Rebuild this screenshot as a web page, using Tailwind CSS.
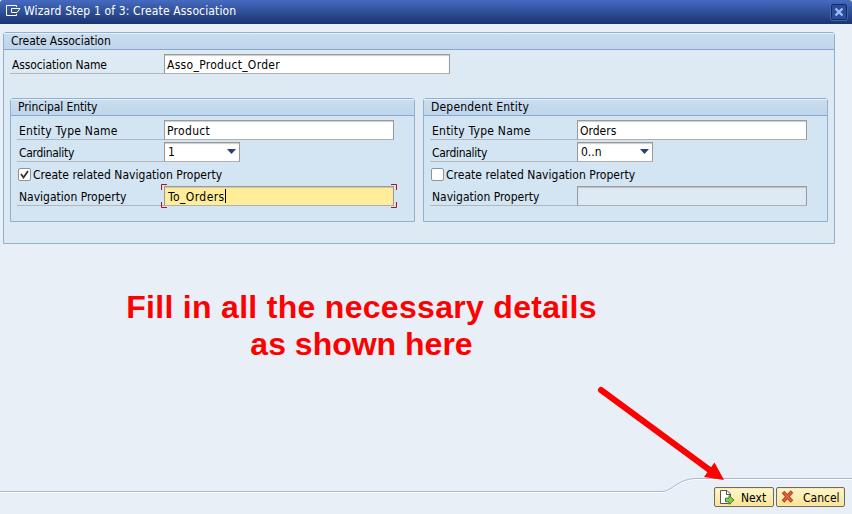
<!DOCTYPE html>
<html lang="en">
<head>
<meta charset="utf-8">
<title>Create Association</title>
<script src="https://cdn.jsdelivr.net/npm/@tailwindcss/browser@4"></script>
</head>
<body class="relative flex h-[514px] w-[852px] flex-col overflow-hidden bg-[#e8eff6] font-['DejaVu_Sans_Condensed','DejaVu_Sans',sans-serif] text-[12px] leading-[16px] whitespace-nowrap text-black">
  <header class="flex h-6 shrink-0 items-center rounded-t-[3px] bg-linear-to-b from-[#466bc2] to-[#19346f] pr-[5px] pl-[6px] text-white">
    <svg class="mb-[3px] h-[12px] w-[16px]" viewBox="0 0 16 12" fill="none" stroke="#fff"><path d="M10.5 2V.5H.5V10.5H10.5V9M9 3.500H5.5V7.5H11L14 3.5H9"/></svg>
    <h1 class="mb-[2px] ml-[2px] flex-1 tracking-[0.14px]">Wizard Step 1 of 3: Create Association</h1>
    <button class="grid h-4 w-4 place-items-center rounded-[2px] border border-[#142b63] bg-[#2b4c98] outline outline-[#3e64b0]"><svg class="size-[10px]" viewBox="0 0 10 10"><path d="M1.5 1.5L8.5 8.5M8.5 1.5L1.5 8.5" stroke="#9cbcff" stroke-width="2.4"/></svg></button>
  </header>
  <main class="mt-2 ml-[3px] h-[212px] w-[832px] shrink-0 rounded-t-[3px] border border-[#90b0cf] bg-[#deeaf3]">
    <h2 class="h-[17px] border-b border-[#86a9cb] bg-linear-to-b from-[#cbdeef] to-[#bfd5eb] pl-[7px] leading-[16px] tracking-[-0.06px] shadow-[inset_0_1px_#e4f1fb]">Create Association</h2>
    <div class="mt-[4px] ml-[6px] flex h-5">
      <label class="w-[154px] border-b border-[#b1b7bd] pl-[2px] leading-[22px] tracking-[-0.12px]">Association Name</label>
      <div class="w-[286px] border border-[#9a9a9c] border-b-[#aeb1b4] bg-white pl-[2px] leading-[20px] tracking-[0.3px] shadow-[inset_0_1px_1px_#ccc]">Asso_Product_Order</div>
    </div>
    <div class="mt-6 ml-[6px] flex gap-2">
      <section class="h-[124px] w-[405px] rounded-t-[3px] border border-[#90b0cf] bg-[#d3e4f2]">
        <h3 class="h-[17px] border-b border-[#86a9cb] bg-linear-to-b from-[#cbdeef] to-[#bfd5eb] pl-[7px] tracking-[-0.1px] shadow-[inset_0_1px_#e4f1fb]">Principal Entity</h3>
        <div class="mt-[4px] ml-[6px] flex flex-col gap-[2px]">
          <div class="flex h-5"><label class="w-[147px] border-b border-[#b1b7bd] pl-[2px] leading-[22px] tracking-[0.24px]">Entity Type Name</label><div class="w-[230px] border border-[#9a9a9c] border-b-[#aeb1b4] bg-white pl-[2px] leading-[20px] tracking-[0.3px] shadow-[inset_0_1px_1px_#ccc]">Product</div></div>
          <div class="flex h-5"><label class="w-[147px] border-b border-[#b1b7bd] pl-[2px] leading-[22px] tracking-[-0.3px]">Cardinality</label><div class="flex w-[76px] justify-between border border-[#9a9a9c] border-b-[#aeb1b4] bg-white pr-[3px] pl-[3px] leading-[19px] shadow-[inset_0_1px_1px_#ccc]">1<svg class="mt-[6px] h-[5px] w-[9px]" viewBox="0 0 9 5"><path d="M0 0H9L4.5 5Z" fill="#293f7b"/></svg></div></div>
          <div class="flex h-5 items-center"><span class="ml-[1px] grid size-[13px] place-items-center rounded-[2px] border border-[#929292] bg-white"><svg class="size-[9px]" viewBox="0 0 9 9"><path d="M1 4L3.5 7.5L8 1" fill="none" stroke="#333" stroke-width="1.8"/></svg></span><label class="mt-[2px] ml-[2px] leading-[20px] tracking-[0.03px]">Create related Navigation Property</label></div>
          <div class="relative flex h-5"><label class="w-[147px] border-b border-[#b1b7bd] pl-[2px] leading-[22px]">Navigation Property</label><div class="flex w-[230px] border border-[#9a9a9c] border-b-[#aeb1b4] bg-[#ffed99] pl-[3px] leading-[20px] tracking-[0.42px] shadow-[inset_0_1px_1px_#ccc6a0]">To_Orders<span class="mt-[2px] h-[14px] w-px bg-black"></span></div>
            <svg class="absolute -top-[2px] left-[144px] h-6 w-[236px]" viewBox="0 0 236 24" fill="none" stroke="#b40d1b"><path d="M6 .5H.5V6M.5 18V23.5H6M230 .5H235.5V6M235.5 18V23.5H230"/></svg></div>
        </div>
      </section>
      <section class="h-[124px] w-[405px] rounded-t-[3px] border border-[#90b0cf] bg-[#d3e4f2]">
        <h3 class="h-[17px] border-b border-[#86a9cb] bg-linear-to-b from-[#cbdeef] to-[#bfd5eb] pl-[7px] tracking-[0.2px] shadow-[inset_0_1px_#e4f1fb]">Dependent Entity</h3>
        <div class="mt-[4px] ml-[6px] flex flex-col gap-[2px]">
          <div class="flex h-5"><label class="w-[147px] border-b border-[#b1b7bd] pl-[2px] leading-[22px] tracking-[0.24px]">Entity Type Name</label><div class="w-[230px] border border-[#9a9a9c] border-b-[#aeb1b4] bg-white pl-[2px] leading-[20px] shadow-[inset_0_1px_1px_#ccc]">Orders</div></div>
          <div class="flex h-5"><label class="w-[147px] border-b border-[#b1b7bd] pl-[2px] leading-[22px] tracking-[-0.3px]">Cardinality</label><div class="flex w-[76px] justify-between border border-[#9a9a9c] border-b-[#aeb1b4] bg-white pr-[3px] pl-[3px] leading-[19px] shadow-[inset_0_1px_1px_#ccc]">0..n<svg class="mt-[6px] h-[5px] w-[9px]" viewBox="0 0 9 5"><path d="M0 0H9L4.5 5Z" fill="#293f7b"/></svg></div></div>
          <div class="flex h-5 items-center"><span class="ml-[1px] size-[13px] rounded-[2px] border border-[#929292] bg-white"></span><label class="mt-[2px] ml-[2px] leading-[20px] tracking-[0.03px]">Create related Navigation Property</label></div>
          <div class="flex h-5"><label class="w-[147px] border-b border-[#b1b7bd] pl-[2px] leading-[22px]">Navigation Property</label><div class="w-[230px] border border-[#9a9a9c] border-b-[#aeb1b4] bg-[#deeaf3] shadow-[inset_0_1px_1px_#bbc2c8]"></div></div>
        </div>
      </section>
    </div>
  </main>
  <p class="mt-[45px] ml-[126px] w-[471px] text-center font-['Liberation_Sans',Arial,sans-serif] text-[32px] leading-[37px] font-bold tracking-[0.3px] text-[#f00]">Fill in all the necessary details<br><span class="tracking-[0px]">as shown here</span></p>
  <svg class="absolute top-[470px] left-0 h-[30px] w-[852px]" viewBox="0 0 852 30" fill="none"><path d="M0 22.5H662C672 22.5 678 9.5 696 9.5H852" stroke="#fff"/><path d="M0 21.5H662C672 21.5 678 8.5 696 8.5H852" stroke="#a9b8cc"/></svg>
  <footer class="mt-auto mb-[7px] flex justify-end gap-[2px] pr-[7px]">
    <button class="flex h-5 w-[60px] items-center rounded-[2px] border border-[#6e6a5f] bg-linear-to-b from-[#fff7cd] to-[#fae394] pl-[5px] shadow-[inset_0_0_0_1px_#ffe9a4]"><svg class="h-[16px] w-[15px]" viewBox="0 0 15 16"><path d="M.5 1.5H7L10.5 5V14.5H.5Z" fill="#fff" stroke="#555"/><path d="M6.500 1.5V5.5H10.5" fill="none" stroke="#555"/><path d="M5.500 9.200H9V6.500L14 11L9 15.300V12.800H5.500Z" fill="#8cc850" stroke="#39852b"/></svg><span class="mt-px ml-[6px]">Next</span></button>
    <button class="flex h-5 w-[69px] items-center rounded-[2px] border border-[#6e6a5f] bg-linear-to-b from-[#fff7cd] to-[#fae394] pl-[4px] shadow-[inset_0_0_0_1px_#ffe9a4]"><svg class="mb-px size-[13px]" viewBox="0 0 13 13"><path d="M2 2L11 11.5M11 1.5L2 11.5" stroke="#b43f1e" stroke-width="3.6"/><path d="M2.5 2.5L10.5 11M10.5 2L2.5 11" stroke="#e5663a" stroke-width="1.8"/></svg><span class="mt-px ml-[9px]">Cancel</span></button>
  </footer>
  <svg class="absolute top-[380px] left-[590px] h-[106px] w-[140px]" viewBox="590 380 140 106"><path d="M601 390L711 471" stroke="#f00" stroke-width="6" stroke-linecap="round"/><path d="M724 480L704 477L714.500 462.500Z" fill="#f00"/></svg>
</body>
</html>
